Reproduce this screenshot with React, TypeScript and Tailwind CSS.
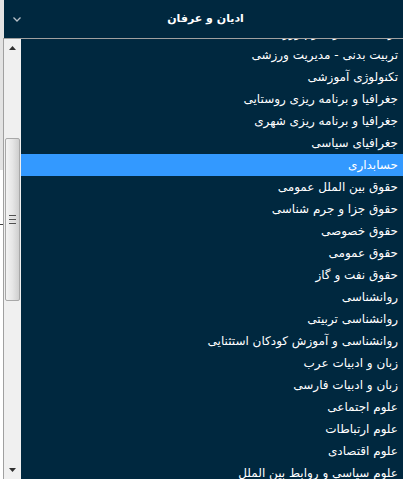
import React from "react";

const items = [
  "تربیت بدنی و علوم ورزشی",
  "تربیت بدنی - مدیریت ورزشی",
  "تکنولوژی آموزشی",
  "جغرافیا و برنامه ریزی روستایی",
  "جغرافیا و برنامه ریزی شهری",
  "جغرافیای سیاسی",
  "حسابداری",
  "حقوق بین الملل عمومی",
  "حقوق جزا و جرم شناسی",
  "حقوق خصوصی",
  "حقوق عمومی",
  "حقوق نفت و گاز",
  "روانشناسی",
  "روانشناسی تربیتی",
  "روانشناسی و آموزش کودکان استثنایی",
  "زبان و ادبیات عرب",
  "زبان و ادبیات فارسی",
  "علوم اجتماعی",
  "علوم ارتباطات",
  "علوم اقتصادی",
  "علوم سیاسی و روابط بین الملل",
];

export default function App() {
  return (
    <div
      className="flex h-[479px] w-[403px] overflow-hidden bg-white"
      style={{ fontFamily: '"DejaVu Sans", Tahoma, sans-serif' }}
    >
      {/* left strip */}
      <div className="flex w-[3px] flex-col">
        <div className="h-[170px] bg-[#e3e3e3]" />
        <div className="h-[54px] bg-white" />
        <div className="h-[1px] bg-[#404040]" />
        <div className="flex-1 bg-white" />
      </div>
      <div className="flex flex-1 flex-col">
        {/* header */}
        <div className="flex h-[38px] border-l border-[#e3e3e3] bg-[#00283f]">
          <div className="flex w-[26px] items-center justify-center pt-[1px]">
            <svg width="8" height="5" viewBox="0 0 8 5">
              <path d="M0.5 0.5 L4 4 L7.5 0.5" stroke="#b8c0c8" strokeWidth="1.3" fill="none" />
            </svg>
          </div>
          <div
            dir="rtl"
            className="flex flex-1 items-center justify-center pr-[22px] text-[11px] font-bold text-white"
          >
            ادیان و عرفان
          </div>
        </div>
        <div className="h-[1px] bg-[#a0a0a0]" />
        {/* body */}
        <div className="flex flex-1 overflow-hidden border-l border-[#a0a0a0]">
          {/* scrollbar */}
          <div className="flex w-[17px] flex-col bg-[#f0f0f0]">
            <div className="flex h-[17px] items-center justify-center">
              <svg width="7" height="4" viewBox="0 0 7 4">
                <path d="M3.5 0 L7 4 L0 4 Z" fill="#303030" />
              </svg>
            </div>
            <div className="h-[82px]" />
            <div className="mx-[1px] flex h-[163px] items-center justify-center rounded-[2px] border border-[#a8a8a8] bg-gradient-to-r from-[#f4f4f4] via-[#e6e6e6] to-[#cfcfcf]">
              <div className="flex flex-col gap-[1px]">
                <div className="h-[1px] w-[7px] bg-[#505050]" />
                <div className="h-[1px] w-[7px] bg-[#dcdcdc]" />
                <div className="h-[1px] w-[7px] bg-[#505050]" />
                <div className="h-[1px] w-[7px] bg-[#dcdcdc]" />
                <div className="h-[1px] w-[7px] bg-[#505050]" />
              </div>
            </div>
            <div className="flex-1" />
            <div className="flex h-[17px] items-center justify-center pb-[2px]">
              <svg width="7" height="4" viewBox="0 0 7 4">
                <path d="M0 0 L7 0 L3.5 4 Z" fill="#303030" />
              </svg>
            </div>
          </div>
          {/* list */}
          <div className="flex-1 overflow-hidden bg-[#00283f]">
            <div className="-mt-[17px] flex flex-col" dir="rtl">
              {items.map((t, i) => (
                <div
                  key={i}
                  className={
                    "flex h-[22px] items-center whitespace-nowrap pr-[5px] text-[12px] text-white " +
                    (t === "حسابداری" ? "bg-[#3399ff]" : "")
                  }
                >
                  {t}
                </div>
              ))}
            </div>
          </div>
        </div>
      </div>
    </div>
  );
}
